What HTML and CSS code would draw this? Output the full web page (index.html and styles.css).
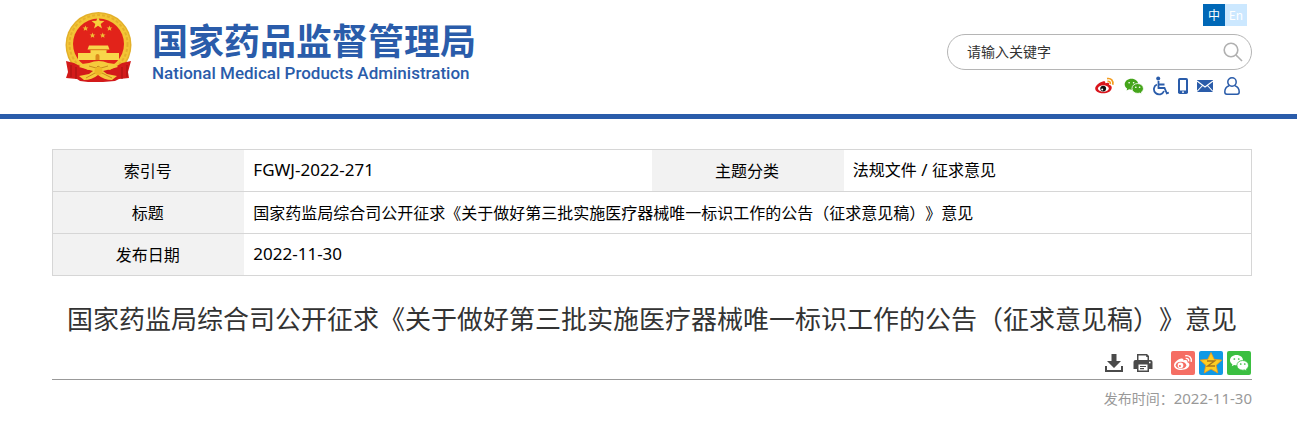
FILE: index.html
```html
<!DOCTYPE html>
<html lang="zh-CN">
<head>
<meta charset="utf-8">
<title>国家药品监督管理局</title>
<link rel="stylesheet" href="styles.css">
</head>
<body>
<header class="header">
  <a class="brand" href="#">
    <svg class="emblem" viewBox="0 0 67 71" aria-hidden="true">
      <circle cx="33.500" cy="34" r="33" fill="#e3b02a"/>
      <circle cx="33.500" cy="34" r="31.500" fill="#f3c536"/>
      <circle cx="33.500" cy="33" r="29" fill="none" stroke="#e5b02c" stroke-width="2" stroke-dasharray="3 2"/>
      <circle cx="33.500" cy="33" r="25.500" fill="#e2231a"/>
      <path fill="#f6cf3c" d="M33 5.500l1.700 4.300 4.700.2-3.700 2.900 1.300 4.500-4-2.600-4 2.600 1.300-4.500-3.700-2.900 4.700-.2z"/>
      <path fill="#f0bd35" d="M20.500 14.500l.8 1.900 2.100.1-1.600 1.300.5 2-1.800-1.100-1.800 1.100.5-2-1.600-1.300 2.100-.1zM44.500 14.500l.8 1.900 2.100.1-1.600 1.300.5 2-1.800-1.100-1.800 1.100.5-2-1.600-1.300 2.100-.1zM27.500 21.500l.8 1.900 2.100.1-1.600 1.300.5 2-1.800-1.100-1.800 1.100.5-2-1.600-1.300 2.100-.1zM37.700 21.500l.8 1.900 2.100.1-1.600 1.300.5 2-1.800-1.100-1.800 1.100.5-2-1.600-1.300 2.100-.1z"/>
      <path fill="#f8d64a" d="M24 34.500h19l1.500 4h-22zM25.500 39h16v3h-16zM13 42h41v7H13z"/>
      <path fill="#dc8a1b" d="M24 38.300h19v.9H24zM30.500 45a2 2 0 0 1 4 0v4h-4z"/>
      <path fill="#d31a1a" d="M1 50l8 2 14 7 10-4 12 4 12-7 9-2-3 11 1 6-10 1-4 2-12 1H23l-8-1-3-2-11-1 2-6z"/>
      <path fill="#f5ca3c" d="M24 52q10-4 19 0l7 1 3 3-11 3-4 1 4 3 10 2-5 4q-8 0-14-5-6 5-14 5l-5-4 10-2 4-3-14-4 3-3z"/>
      <path fill="none" stroke="#c98a1c" d="M24 55l7 2 2-2 3 2 7-2M21 67l9-5h7l10 5"/>
      <path fill="none" stroke="#a31211" d="M6 54v12M11 56v12M57 56v12M62 54v12"/>
      <circle cx="33.500" cy="60" r="4" fill="#eeb626"/>
    </svg>
    <span class="names">
      <span class="name-zh">国家药品监督管理局</span>
      <span class="name-en">National Medical Products Administration</span>
    </span>
  </a>
  <div class="side">
    <nav class="langs" aria-label="语言">
      <a class="lang lang-on" href="#">中</a><a class="lang" href="#">En</a>
    </nav>
    <form class="search">
      <input class="search-text" type="text" aria-label="关键字" placeholder="请输入关键字">
      <button class="search-go" type="button" aria-label="搜索">
        <svg width="20" height="20" viewBox="0 0 20 20" fill="none" stroke="#b0b0b0" stroke-width="1.600"><circle cx="8" cy="8" r="6.800"/><path d="M13 13l6 6"/></svg>
      </button>
    </form>
    <nav class="quick" aria-label="快捷入口">
      <a href="#" aria-label="微博"><svg width="20" height="18" viewBox="0 0 24 22"><path fill="#d9151c" d="M10 5.200c1.500-.4 2.700.2 2.300 2.400 3-1.200 5.300-.8 4.700 1.800 2.400.8 3.500 2 3.200 4-.5 4-5 6.600-10.500 6.600C4.500 20 0 17.500 0 14c0-3.500 6-8 10-8.800z"/><ellipse cx="10" cy="14" rx="6.600" ry="4" fill="#fff"/><circle cx="9.800" cy="14.200" r="3.500" fill="#111"/><circle cx="8.600" cy="15.200" r="1.200" fill="#fff"/><path fill="none" stroke="#f39c1f" stroke-width="2" d="M14.500 2c5-1 8 2.500 7 7.500M15 5.300c2.500-.4 3.900 1 3.500 3.400"/></svg></a>
      <a href="#" aria-label="微信"><svg width="20" height="18" viewBox="0 0 24 22"><path fill="#45a51b" d="M9 2C4.300 2 .6 5 .6 8.800c0 2.200 1.100 4 3 5.200L3 16.600l3-1.500c1 .3 2 .4 3 .4 4.500 0 8.300-3 8.300-6.700S13.600 2 9 2z"/><path fill="#45a51b" stroke="#fff" d="M16.500 8c-4 0-7 2.600-7 6s3 6 7 6c.8 0 1.600-.1 2.400-.4l2.600 1.400-.6-2.300c1.600-1 2.600-2.700 2.600-4.600 0-3.500-3-6.100-7-6.100z"/><path stroke="#fff" stroke-width="2" stroke-linecap="round" d="M6 7h.1M11.500 7h.1M14.200 12.500h.1M18.800 12.500h.1"/></svg></a>
      <a href="#" aria-label="无障碍"><svg width="16" height="20" viewBox="0 0 16 20" fill="none" stroke="#2a5caa" stroke-width="1.800"><circle cx="5.200" cy="2.500" r="2" fill="#2a5caa" stroke="none"/><path d="M5.500 5v7h6l2.300 5.300 2-.8M6 8.500h5.500M3.900 8.500A5.200 5.200 0 1 0 11 15"/></svg></a>
      <a href="#" aria-label="手机"><svg width="10" height="16" viewBox="0 0 10 16"><rect width="10" height="16" rx="1.800" fill="#2a5caa"/><path fill="#fff" d="M2 2h6v10.500H2zM4 13.500h2v1.200H4z"/></svg></a>
      <a href="#" aria-label="邮箱"><svg width="16" height="12" viewBox="0 0 16 12"><path fill="#2a5caa" d="M0 0h16v12H0z"/><path fill="none" stroke="#fff" stroke-width="1.100" d="M0 1l8 6 8-6M0 11.500l5.500-6M16 11.500l-5.500-6"/></svg></a>
      <a class="user" href="#" aria-label="用户"><svg width="16" height="18" viewBox="0 0 16 18" fill="none" stroke="#2a5caa" stroke-width="1.500"><circle cx="8" cy="5" r="4.200"/><path d="M5.200 8.800C2.500 9.600.8 12 .8 15c0 1.500.5 2.200 2 2.200h10.400c1.500 0 2-.7 2-2.200 0-3-1.700-5.400-4.400-6.200"/></svg></a>
    </nav>
  </div>
</header>
<main class="main">
  <table class="info">
    <tr>
      <th scope="row">索引号</th><td class="cell-code"><span class="latin">FGWJ-2022-271</span></td>
      <th scope="row">主题分类</th><td>法规文件<span class="latin"> / </span>征求意见</td>
    </tr>
    <tr><th scope="row">标题</th><td colspan="3">国家药监局综合司公开征求《关于做好第三批实施医疗器械唯一标识工作的公告（征求意见稿）》意见</td></tr>
    <tr><th scope="row">发布日期</th><td colspan="3"><span class="latin">2022-11-30</span></td></tr>
  </table>
  <h1 class="title">国家药监局综合司公开征求《关于做好第三批实施医疗器械唯一标识工作的公告（征求意见稿）》意见</h1>
  <div class="tools">
    <button class="tool" type="button" aria-label="下载"><svg width="20" height="20" viewBox="0 0 20 20" fill="#4a4a4a"><path d="M7.500 1h5v7H17l-7 7-7-7h4.500z"/><path d="M1 13h2v4h14v-4h2v6H1z"/></svg></button>
    <button class="tool" type="button" aria-label="打印"><svg width="20" height="20" viewBox="0 0 20 20"><path fill="#4a4a4a" d="M4 1h10l2 2v4H4zM2.500 7h15Q19.500 7 19.500 9v7H16v3H4v-3H.5V9q0-2 2-2z"/><path fill="#fff" d="M5.500 2.500h7.700V4h1.300v3h-9zM5.500 11.500h9v6h-9zM16 8.800h1.500v1.400H16z"/><path stroke="#4a4a4a" stroke-width="1.200" d="M7 13.500h6M7 15.700h4"/></svg></button>
    <a class="share share-weibo" href="#" aria-label="分享到微博"><svg width="24" height="24" viewBox="0 0 24 24"><path fill="#fff" d="M10.500 7.500c1.300-.2 2.300.5 1.900 2 2.600-.9 4.500-.3 3.900 1.700 1.700.6 2.300 1.600 2 3.100-.5 2.800-4 4.700-8 4.700-4.300 0-7.300-2-7.300-4.800 0-2.700 4.300-6.400 7.500-6.700z"/><ellipse cx="10" cy="14.300" rx="5.300" ry="3.500" fill="#f56e64"/><circle cx="9.500" cy="14.400" r="2.800" fill="#fff"/><circle cx="8.900" cy="15" r="1.100" fill="#f56e64"/><path fill="none" stroke="#fff" stroke-width="1.400" d="M14.300 4.800c4-.8 6.800 2.200 5.900 6M14.700 7.400c2.100-.3 3.300 1 2.900 2.900"/></svg></a>
    <a class="share share-qzone" href="#" aria-label="分享到QQ空间"><svg width="24" height="24" viewBox="0 0 24 24"><path fill="#ffce21" stroke="#ee971b" stroke-width=".8" d="M12 1.500l3.200 6.800 7.600.8-5.600 5.200 1.600 7.700-6.800-3.900L5.200 22l1.600-7.700-5.600-5.200 7.600-.8z"/><path fill="none" stroke="#a8761c" stroke-width="1.400" d="M8 10h7.500l-6.800 5H16"/></svg></a>
    <a class="share share-wechat" href="#" aria-label="分享到微信"><svg width="24" height="24" viewBox="0 0 24 24"><path fill="#fff" d="M9.500 4C5.800 4 3 6.300 3 9.200c0 1.700.9 3.100 2.400 4L4.800 15.200l2.300-1.200c.8.200 1.600.3 2.400.3 3.700 0 6.500-2.200 6.500-5.100S13.200 4 9.500 4z"/><path fill="#fff" stroke="#3bbf41" stroke-width=".8" d="M15.700 9.500c-3.300 0-5.800 2.100-5.800 4.800s2.500 4.900 5.800 4.900c.7 0 1.300-.1 1.900-.3l2.200 1.200-.5-1.900c1.300-.9 2.200-2.200 2.200-3.900 0-2.700-2.500-4.800-5.800-4.800z"/><path stroke="#3bbf41" stroke-width="1.700" stroke-linecap="round" d="M7.300 8h.1M11.700 8h.1M13.700 13h.1M17.700 13h.1"/></svg></a>
  </div>
  <p class="date">发布时间：<span class="date-num">2022-11-30</span></p>
</main>
</body>
</html>
```
FILE: styles.css
```css
* { box-sizing: border-box; }
body {
  margin: 0;
  background: #fff;
  color: #000;
  font-family: "Noto Sans CJK SC", sans-serif;
  font-size: 16px;
  text-spacing-trim: space-all;
}
a { color: inherit; text-decoration: none; }
svg { display: block; }
button { padding: 0; border: 0; background: none; cursor: pointer; }
.header {
  display: flex;
  justify-content: space-between;
  padding: 4px 45px 0 52px;
  min-height: 119px;
  border-bottom: 5px solid #2a5caa;
}
.brand {
  display: flex;
  align-items: flex-start;
  gap: 20px;
  padding: 7px 0 0 13px;
  color: #2a5caa;
}
.emblem { width: 67px; height: 71px; }
.names { display: flex; flex-direction: column; padding-top: 8px; }
.name-zh { font-size: 36px; font-weight: 700; line-height: 40px; }
.name-en { font-family: Roboto, sans-serif; font-size: 17px; font-weight: 500; line-height: 28px; }
.side { display: flex; flex-direction: column; width: 305px; }
.langs { display: flex; justify-content: flex-end; padding-right: 5px; }
.lang {
  width: 22px;
  background: #cce8ff;
  color: #fff;
  font-size: 12px;
  line-height: 22px;
  text-align: center;
}
.lang-on { background: #0068b7; }
.search {
  display: flex;
  align-items: center;
  height: 36px;
  margin-top: 8px;
  padding: 0 8px 0 19px;
  border: 1px solid #b5b5b5;
  border-radius: 18px;
}
.search-text {
  flex: 1;
  min-width: 0;
  padding: 0 0 2px;
  border: 0;
  outline: 0;
  background: none;
  font: 14px "Noto Sans CJK SC", sans-serif;
}
.search-text::placeholder { color: #333; opacity: 1; }
.quick {
  display: flex;
  align-items: center;
  justify-content: flex-end;
  gap: 9px;
  margin-top: 6px;
  padding-right: 12px;
}
.user { margin-left: 2px; }
.main { padding: 30px 45px 0 52px; }
.info {
  width: 100%;
  border-collapse: collapse;
  table-layout: fixed;
  border: 1px solid #d6d6d6;
}
.info tr { height: 42px; border-bottom: 1px solid #d6d6d6; }
.info th { width: 16%; padding: 0 2px 2px 0; background: #f2f2f2; font-weight: 400; }
.info td { padding: 0 9px 2px; line-height: 24px; }
.info .cell-code { width: 34%; }
.latin { font-family: "Noto Sans", sans-serif; font-size: 17px; }
.title {
  margin: 22px 0 0;
  color: #333;
  font-size: 26px;
  font-weight: 400;
  line-height: 40px;
  text-align: center;
}
.tools {
  display: flex;
  align-items: center;
  justify-content: flex-end;
  gap: 4px;
  padding: 13px 1px 4px 0;
  border-bottom: 1px solid #999;
}
.tool { margin-right: 5px; }
.tool + .share { margin-left: 9px; }
.share { border-radius: 2px; }
.share-weibo { background: #f56e64; }
.share-qzone { background: #1099e5; }
.share-wechat { background: #3bbf41; }
.date {
  margin: 7px 0 0;
  color: #999;
  font-size: 14px;
  line-height: 22px;
  text-align: right;
}
.date-num { font-family: "Noto Sans", sans-serif; font-size: 15px; }
```
